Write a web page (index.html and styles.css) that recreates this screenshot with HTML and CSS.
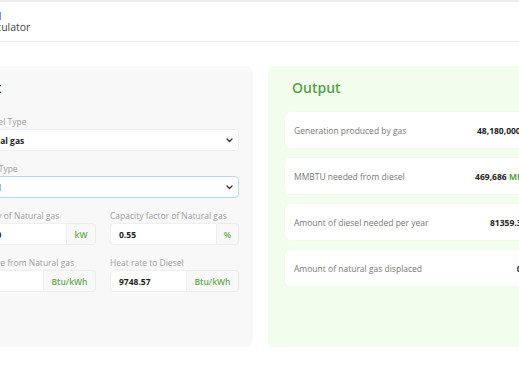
FILE: index.html
```html
<!DOCTYPE html>
<html lang="en">
<head>
<meta charset="utf-8">
<title>Fuel Calculator</title>
<link rel="stylesheet" href="styles.css">
</head>
<body>
<div class="topbar"></div>
<header class="header">
  <div class="brand">Fuel<br>Calculator</div>
</header>
<main class="main">
  <section class="card input-card">
    <h2 class="card-title">Input</h2>
    <div class="field">
      <div class="label">Your Fuel Type</div>
      <div class="select">
        <span>Natural gas</span>
        <svg class="chev" width="7" height="5" viewBox="0 0 7 5"><path d="M1 1l2.5 2.5L6 1" fill="none" stroke="#333" stroke-width="1.3" stroke-linecap="round" stroke-linejoin="round"/></svg>
      </div>
    </div>
    <div class="field">
      <div class="label">To Fuel Type</div>
      <div class="select focused">
        <span>Diesel</span>
        <svg class="chev" width="7" height="5" viewBox="0 0 7 5"><path d="M1 1l2.5 2.5L6 1" fill="none" stroke="#333" stroke-width="1.3" stroke-linecap="round" stroke-linejoin="round"/></svg>
      </div>
    </div>
    <div class="grid">
      <div class="field">
        <div class="label">Capacity of Natural gas</div>
        <div class="group">
          <div class="input">10000</div>
          <div class="addon addon-kw">kW</div>
        </div>
      </div>
      <div class="field">
        <div class="label">Capacity factor of Natural gas</div>
        <div class="group">
          <div class="input">0.55</div>
          <div class="addon addon-pct">%</div>
        </div>
      </div>
      <div class="field">
        <div class="label">Heat rate from Natural gas</div>
        <div class="group">
          <div class="input">9500</div>
          <div class="addon addon-btu">Btu/kWh</div>
        </div>
      </div>
      <div class="field">
        <div class="label">Heat rate to Diesel</div>
        <div class="group">
          <div class="input">9748.57</div>
          <div class="addon addon-btu">Btu/kWh</div>
        </div>
      </div>
    </div>
  </section>
  <section class="card output-card">
    <h2 class="card-title out-title">Output</h2>
    <div class="rows">
      <div class="row"><span class="row-label">Generation produced by gas</span><span class="row-value">48,180,000 <span class="unit">kWh</span></span></div>
      <div class="row"><span class="row-label">MMBTU needed from diesel</span><span class="row-value">469,686 <span class="unit">MMBTU</span></span></div>
      <div class="row"><span class="row-label">Amount of diesel needed per year</span><span class="row-value">81359.33 <span class="unit">bbl</span></span></div>
      <div class="row"><span class="row-label">Amount of natural gas displaced</span><span class="row-value">0 <span class="unit">MCF</span></span></div>
    </div>
  </section>
</main>
</body>
</html>
```
FILE: styles.css
```css
html, body {
  margin: 0;
  padding: 0;
  background: #ffffff;
  overflow: hidden;
  font-family: "Open Sans", "Lato", sans-serif;
  color: #333;
}

.topbar {
  height: 2px;
  background: #eeeeee;
}

.header {
  height: 39px;
  border-bottom: 1px solid #f0f0f0;
  display: flex;
  align-items: center;
}

.brand {
  margin-left: -19px;
  font-size: 10.5px;
  line-height: 11px;
  color: #444;
}

.main {
  display: flex;
  gap: 15px;
  margin-left: -46px;
  padding-top: 24px;
}

.card {
  border-radius: 7px;
  height: 281px;
  box-sizing: border-box;
  flex: none;
}

.input-card {
  width: 299px;
  background: #f8f8f8;
  padding: 12px 14px 0 14px;
}

.output-card {
  width: 301px;
  background: #f2fdee;
  padding: 12px 17px 0 17px;
}

.card-title {
  margin: 0 0 18px -3px;
  font-size: 14px;
  line-height: 20px;
  font-weight: 600;
  color: #2b2b2b;
}

.out-title {
  margin: 0 0 14px 7px;
  color: #5b9d4a;
}

.field {
  margin-bottom: 12px;
}

.label {
  font-size: 8.5px;
  line-height: 12px;
  margin-bottom: 1px;
  color: #a0a0a0;
  white-space: nowrap;
}

.select {
  height: 22px;
  box-sizing: border-box;
  background: #fff;
  border: 1px solid #efefef;
  border-radius: 4px;
  display: flex;
  align-items: center;
  justify-content: space-between;
  padding: 0 5px 0 6px;
  font-size: 8.5px;
  font-weight: 700;
  color: #222;
}

.select.focused {
  border-color: #b6d6f7;
}

.grid {
  display: grid;
  grid-template-columns: 128px 129px;
  column-gap: 14px;
}

.group {
  display: flex;
  height: 22px;
}

.input {
  flex: 1;
  min-width: 0;
  box-sizing: border-box;
  background: #fff;
  border: 1px solid #efefef;
  border-radius: 4px 0 0 4px;
  padding: 0 8px;
  display: flex;
  align-items: center;
  font-size: 8.5px;
  font-weight: 700;
  color: #222;
}

.addon {
  flex: none;
  box-sizing: border-box;
  background: #f8f8f8;
  border: 1px solid #ececec;
  border-left: none;
  border-radius: 0 4px 4px 0;
  display: flex;
  align-items: center;
  justify-content: center;
  font-size: 8.5px;
  font-weight: 600;
  color: #6aa857;
}

.addon-kw { width: 29px; }
.addon-pct { width: 22px; }
.addon-btu { width: 52px; }

.rows {
  display: flex;
  flex-direction: column;
  gap: 10px;
}

.row {
  height: 36px;
  background: #fff;
  border-radius: 5px;
  display: flex;
  align-items: center;
  justify-content: space-between;
  padding: 0 10px 0 9px;
  box-shadow: 0 0 2px rgba(0,0,0,0.03);
}

.row-label {
  font-size: 8.5px;
  color: #777;
}

.row-value {
  font-size: 8.5px;
  font-weight: 700;
  color: #222;
  white-space: nowrap;
}

.unit {
  color: #5b9d4a;
}
```
